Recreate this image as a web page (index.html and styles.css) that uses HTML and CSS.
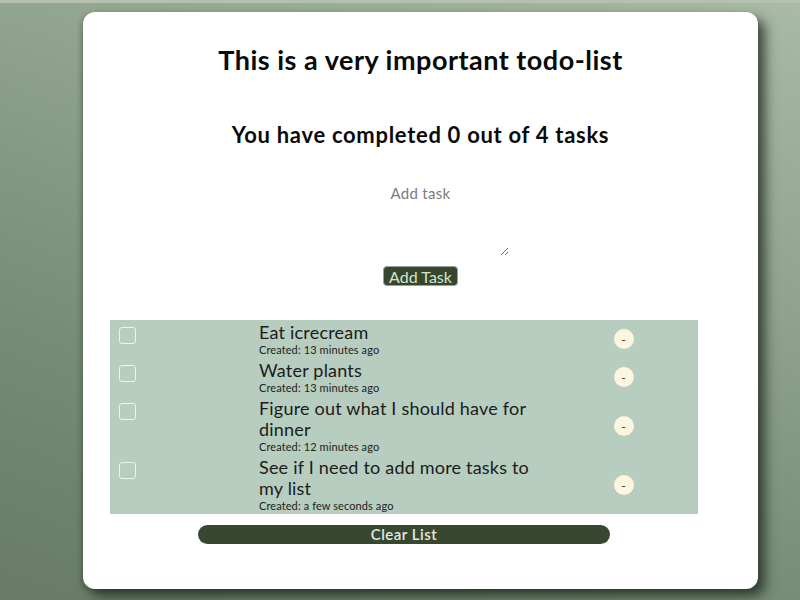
FILE: index.html
```html
<!DOCTYPE html>
<html lang="en">
<head>
<meta charset="utf-8">
<title>Todo list</title>
<link rel="stylesheet" href="styles.css">
</head>
<body>
<div class="topline"></div>
<main class="card">
  <h1 class="title">This is a very important todo-list</h1>
  <h2 class="counter">You have completed 0 out of 4 tasks</h2>
  <form class="add-form">
    <textarea class="task-input" placeholder="Add task"></textarea>
    <button type="button" class="add-btn">Add Task</button>
  </form>
  <section class="list-wrap">
    <ul class="task-list">
      <li class="task">
        <input type="checkbox" class="check">
        <div class="task-text">
          <div class="task-name">Eat icrecream</div>
          <div class="task-meta">Created: 13 minutes ago</div>
        </div>
        <div class="del-cell"><button type="button" class="del-btn">-</button></div>
      </li>
      <li class="task">
        <input type="checkbox" class="check">
        <div class="task-text">
          <div class="task-name">Water plants</div>
          <div class="task-meta">Created: 13 minutes ago</div>
        </div>
        <div class="del-cell"><button type="button" class="del-btn">-</button></div>
      </li>
      <li class="task">
        <input type="checkbox" class="check">
        <div class="task-text">
          <div class="task-name">Figure out what I should have for dinner</div>
          <div class="task-meta">Created: 12 minutes ago</div>
        </div>
        <div class="del-cell"><button type="button" class="del-btn">-</button></div>
      </li>
      <li class="task">
        <input type="checkbox" class="check">
        <div class="task-text">
          <div class="task-name">See if I need to add more tasks to my list</div>
          <div class="task-meta">Created: a few seconds ago</div>
        </div>
        <div class="del-cell"><button type="button" class="del-btn">-</button></div>
      </li>
    </ul>
    <button type="button" class="clear-btn">Clear List</button>
  </section>
</main>
</body>
</html>
```
FILE: styles.css
```css
* { box-sizing: border-box; }

html, body {
  margin: 0;
  padding: 0;
}

body {
  min-height: 600px;
  font-family: Lato, "Noto Sans", sans-serif;
  color: #111;
  background: linear-gradient(200deg, #a9baa5 0%, #8fa38d 35%, #758b74 70%, #677b66 100%);
  overflow: hidden;
}

.topline {
  height: 3px;
  background: #b3c1ae;
}

.card {
  margin: 9px 0 0 83px;
  width: 675px;
  height: 577px;
  background: #fff;
  border-radius: 12px;
  box-shadow: 7px 7px 12px rgba(25, 38, 25, 0.75), -2px 2px 4px rgba(25, 38, 25, 0.25);
  padding: 32px 0 0 27px;
}

.title {
  margin: 0 0 0 -27px;
  text-align: center;
  font-size: 27px;
  letter-spacing: 0.5px;
  line-height: 32px;
  font-weight: 700;
  color: #0a0a0a;
}

.counter {
  margin: 46px 0 0 -27px;
  text-align: center;
  font-size: 22px;
  letter-spacing: 0.7px;
  line-height: 26px;
  font-weight: 700;
  color: #0a0a0a;
}

.add-form {
  margin: 34px 0 0 -27px;
  display: flex;
  flex-direction: column;
  align-items: center;
}

.task-input {
  width: 176px;
  height: 74px;
  border: none;
  outline: none;
  resize: both;
  text-align: center;
  font-family: inherit;
  font-size: 15px;
  letter-spacing: 0.3px;
  padding: 2px;
  color: #222;
}
.task-input::placeholder { color: #7b7b7b; }

.add-btn {
  margin-top: 10px;
  height: 20px;
  width: 75px;
  padding: 0;
  background: #37472f;
  color: #d3e4cb;
  border: 1px solid #9aa196;
  border-radius: 4px;
  font-family: inherit;
  font-size: 16px;
  line-height: 17px;
}

.list-wrap {
  margin-top: 34px;
  width: 588px;
  display: flex;
  flex-direction: column;
  align-items: center;
}

.task-list {
  list-style: none;
  margin: 0;
  padding: 0;
  width: 100%;
  background: #b7cdbf;
}

.task {
  display: grid;
  grid-template-columns: 1fr 2fr 1fr;
  align-items: start;
}

.check {
  appearance: none;
  -webkit-appearance: none;
  margin: 7px 0 0 9px;
  width: 17px;
  height: 17px;
  border: 1px solid #eef3ec;
  border-radius: 3px;
  background: transparent;
}

.task-text {
  padding: 2px 10px 0 2px;
}

.task-name {
  font-size: 18px;
  letter-spacing: 0.2px;
  line-height: 21px;
  color: #1b1b1b;
}

.task-meta {
  font-size: 11px;
  letter-spacing: 0.1px;
  line-height: 13px;
  padding-bottom: 2px;
  color: #222;
}

.del-cell {
  align-self: center;
  display: flex;
  justify-content: center;
  padding-right: 2px;
}

.del-btn {
  width: 20px;
  height: 20px;
  border-radius: 50%;
  border: none;
  background: #fbf6dd;
  color: #333;
  font-family: inherit;
  font-size: 12px;
  line-height: 21px;
  padding: 0;
}

.clear-btn {
  margin-top: 11px;
  width: 70%;
  height: 19px;
  border: none;
  border-radius: 10px;
  background: #38472f;
  color: #e2eadf;
  font-family: inherit;
  font-size: 15px;
  letter-spacing: 0.5px;
  font-weight: 600;
  line-height: 19px;
  padding: 0;
}
```
